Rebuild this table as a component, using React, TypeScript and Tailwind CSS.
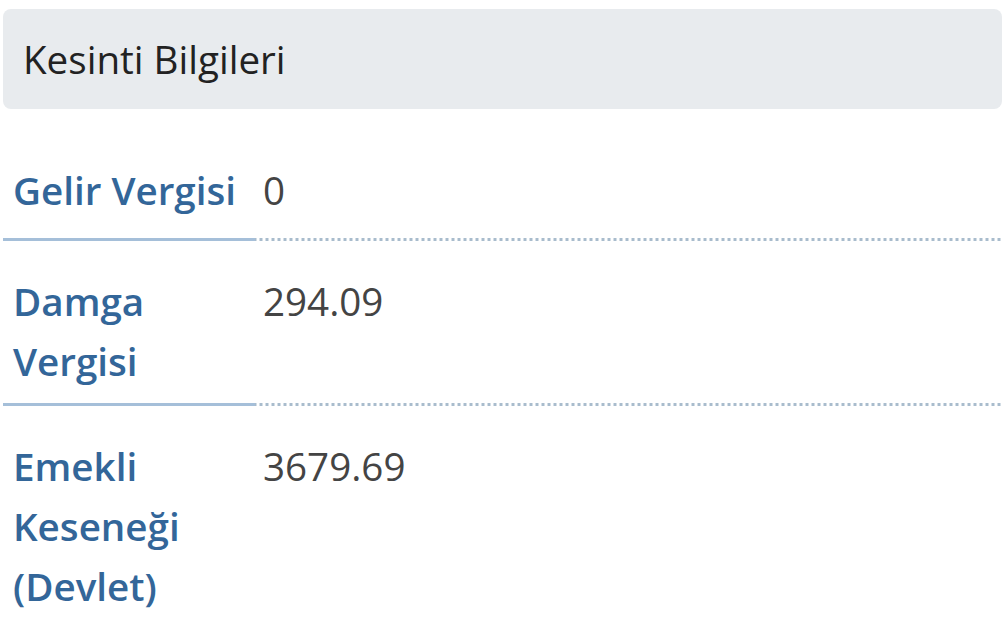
const rows = [
  { label: "Gelir Vergisi", value: "0", cls: "pt-[30px] pb-[18px]" },
  { label: "Damga Vergisi", value: "294.09", cls: "pt-[30px] pb-[12px]" },
  { label: "Emekli Keseneği (Devlet)", value: "3679.69", cls: "pt-[30px] pb-[12px]" },
];

export default function App() {
  return (
    <div
      className="min-h-screen bg-white pl-[3px] pr-[1px] pt-[9px] text-[38.6px] leading-[60px]"
      style={{ fontFamily: '"Open Sans", "Noto Sans", sans-serif' }}
    >
      <div className="rounded-[8px] bg-[#e8ebee] px-[20px] py-[20px] text-[#222]">
        Kesinti Bilgileri
      </div>

      <div className="mt-[21px]">
        {rows.map((r, i) => (
          <div key={i} className="flex">
            <div
              className={`w-[252px] shrink-0 border-b-[3px] border-[#a5bfd9] pl-[10px] pr-[8px] font-semibold text-[#336699] ${r.cls}`}
            >
              {r.label}
            </div>
            <div
              className={`flex-1 bg-[linear-gradient(to_right,#a9bccd_50%,transparent_50%)] bg-[length:6px_3px] bg-bottom bg-repeat-x pl-[8px] pb-[3px] text-[#444] ${r.cls}`}
            >
              {r.value}
            </div>
          </div>
        ))}
      </div>
    </div>
  );
}
